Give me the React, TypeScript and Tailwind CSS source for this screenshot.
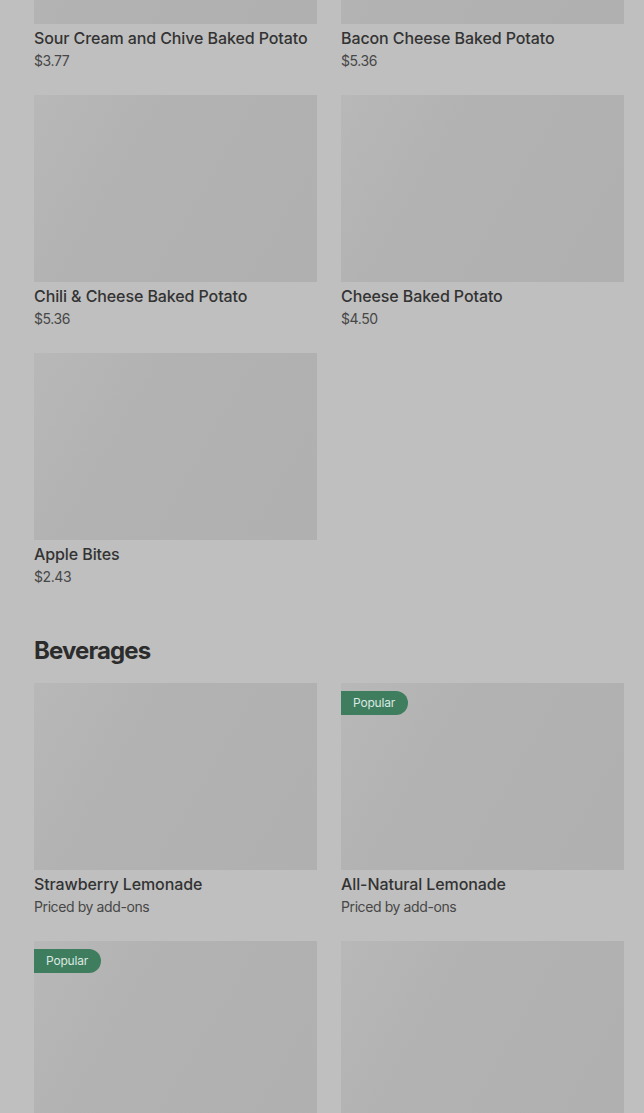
import React from "react";

type Item = {
  name: string;
  price: string;
  popular?: boolean;
};

const sides: Item[] = [
  { name: "Sour Cream and Chive Baked Potato", price: "$3.77" },
  { name: "Bacon Cheese Baked Potato", price: "$5.36" },
  { name: "Chili & Cheese Baked Potato", price: "$5.36" },
  { name: "Cheese Baked Potato", price: "$4.50" },
  { name: "Apple Bites", price: "$2.43" },
];

const beverages: Item[] = [
  { name: "Strawberry Lemonade", price: "Priced by add-ons" },
  { name: "All-Natural Lemonade", price: "Priced by add-ons", popular: true },
  { name: "Frosty", price: "$2.19", popular: true },
  { name: "Coca-Cola", price: "$2.39" },
];

function ItemCard({ item }: { item: Item }) {
  return (
    <div className="flex flex-col">
      <div className="relative h-[187px] w-full bg-[linear-gradient(120deg,#b8b8b8_0%,#b2b2b2_35%,#b0b0b0_100%)]">
        {item.popular ? (
          <span className="absolute left-0 top-2 flex h-6 items-center rounded-r-full bg-[#3f7d5f] pl-3 pr-[13px] text-[12px] leading-4 tracking-[-0.2px] text-[#dbe9e1]">
            Popular
          </span>
        ) : null}
      </div>
      <div className="mt-1 text-[16px] font-medium leading-5 tracking-[-0.1px] text-[#333333]">
        {item.name}
      </div>
      <div className="mt-[3px] text-[14px] leading-5 tracking-[-0.4px] text-[#474747]">{item.price}</div>
    </div>
  );
}

export default function App() {
  return (
    <div className="h-[1113px] overflow-hidden bg-[#bfbfbf] font-['Inter',sans-serif]">
      <div className="-mt-[163px] pl-[34px] pr-[20px]">
        <div className="grid grid-cols-2 gap-x-6 gap-y-6">
          {sides.map((it) => (
            <ItemCard key={it.name} item={it} />
          ))}
        </div>

        <h2 className="mt-[48px] text-[24px] font-bold leading-8 tracking-[-0.9px] text-[#2c2c2c]">
          Beverages
        </h2>

        <div className="mt-4 grid grid-cols-2 gap-x-6 gap-y-6">
          {beverages.map((it) => (
            <ItemCard key={it.name} item={it} />
          ))}
        </div>
      </div>
    </div>
  );
}
